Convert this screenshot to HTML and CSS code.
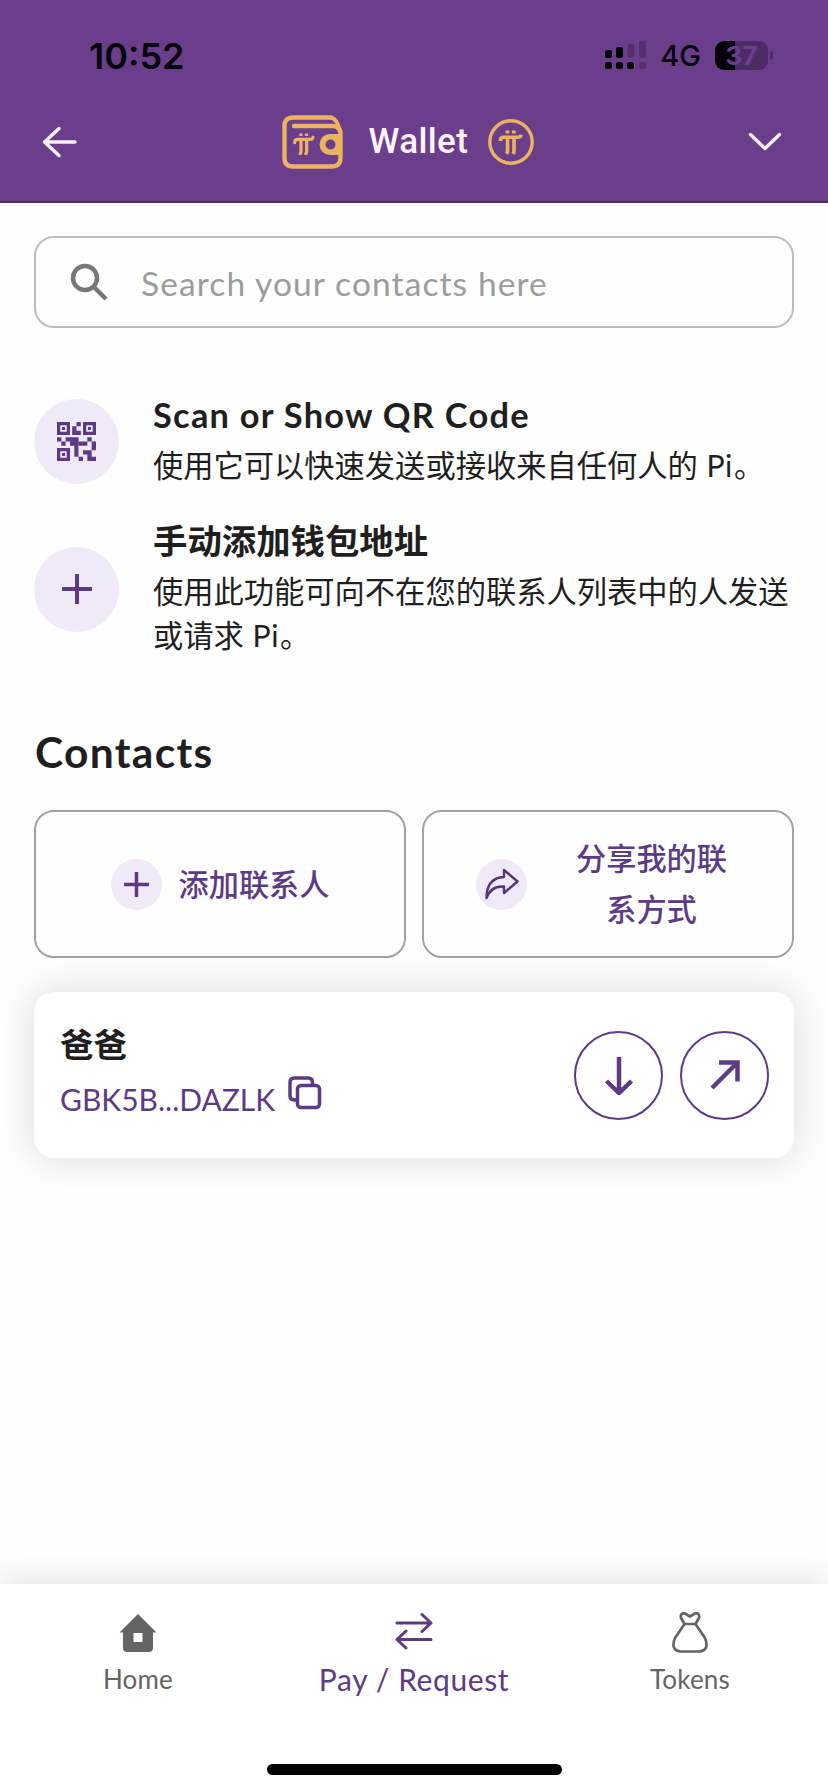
FILE: index.html
```html
<!DOCTYPE html>
<html lang="zh-CN">
<head>
<meta charset="utf-8">
<meta name="viewport" content="width=device-width">
<title>Wallet</title>
<link rel="stylesheet" href="styles.css">
</head>
<body>
<svg class="defs" width="0" height="0" aria-hidden="true">
  <symbol id="pi" viewBox="0 0 24 24">
    <path d="M6.800 .5h3.600v2.800H6.800zM12.900 .5h3.600v2.800h-3.600z" fill="currentColor"/>
    <path d="M1.800 10.500C1.800 7.800 3 7 5 7h13.500c2 0 3-.6 3.300-2.400M8.700 7v12.500q0 1.800-.9 3.500M14.900 7v12.500q0 1.800-.9 3.500" fill="none" stroke="currentColor" stroke-width="3.500"/>
  </symbol>
</svg>
<div class="screen">
  <header class="header">
    <div class="status">
      <span class="time">10:52</span>
      <div class="status-right">
        <svg class="signal" width="42" height="30" viewBox="0 0 42 30">
          <rect x="1" y="10" width="7" height="8" rx="2"/><rect x="12" y="7" width="7" height="11" rx="2"/>
          <rect x="1" y="22" width="7" height="7" rx="2.500"/><rect x="12" y="22" width="7" height="7" rx="2.500"/><rect x="23" y="22" width="7" height="7" rx="2.500"/>
          <g opacity=".2"><rect x="23.500" y="4" width="7" height="14" rx="2"/><rect x="35" y="1" width="7" height="17" rx="2"/><rect x="35" y="22" width="7" height="7" rx="2.500"/></g>
        </svg>
        <span class="network">4G</span>
        <div class="battery"><span class="battery-level">37</span></div>
        <span class="battery-tip"></span>
      </div>
    </div>
    <div class="titlebar">
      <svg class="back" width="36" height="32" viewBox="0 0 36 32"><path d="M33 16H2.500M17 2.500 2.500 16 17 29.500"/></svg>
      <div class="brand">
        <svg class="wallet" width="61" height="54" viewBox="0 0 61 54">
          <path d="M49 2.500H11Q2.500 2.500 2.500 11V43Q2.500 51.500 11 51.500H49Q58.500 51.500 58.500 43V19Q58.500 11 50 11H12" stroke-width="4.400"/>
          <path d="M49 2.500Q55.500 4.500 57 14" stroke-width="4"/>
          <path d="M59 19H48a10.500 10.500 0 0 0 0 21H59Z" fill="#ebb35f" stroke="none"/>
          <circle cx="48.500" cy="29.500" r="5" fill="#6a3e8b" stroke="none"/>
          <use href="#pi" x="11" y="18" width="22" height="22"/>
        </svg>
        <span class="brand-name">Wallet</span>
        <svg class="coin" width="46" height="46" viewBox="0 0 46 46"><circle cx="23" cy="23" r="21.200"/><use href="#pi" x="10" y="11" width="26" height="25"/></svg>
      </div>
      <svg class="chevron" width="34" height="20" viewBox="0 0 34 20"><path d="M2.500 2.500 17 16.500 31.500 2.500"/></svg>
    </div>
  </header>

  <main class="content">
    <label class="search">
      <svg width="38" height="38" viewBox="0 0 38 38"><circle cx="15" cy="15" r="12"/><path d="M23.500 23.500 36 36"/></svg>
      <span class="search-hint">Search your contacts here</span>
    </label>

    <section class="option option-scan">
      <div class="disc">
        <svg width="39" height="39" viewBox="0 0 18 18" fill="#5d3a86">
          <path fill-rule="evenodd" d="M0 0h6v6H0zM1.500 1.500v3h3v-3zM12 0h6v6h-6zM13.500 1.500v3h3v-3zM0 12h6v6H0zM1.500 13.500v3h3v-3z"/>
          <path d="M2.300 2.300h1.400v1.400H2.300zM14.300 2.300h1.400v1.400h-1.400zM2.300 14.300h1.400v1.400H2.300zM9 0h2v2H9zM7 2h2v2h2v2H7zM0 7h2v2H0zM2 9h2v2H2zM4 7h6v2H9.900v7H8v-5H8V9H4zM6 9h2v2H6zM14 7h2v2h-2zM10 9h4v2h-4zM16 9h2v4h-2zM12 13h4v3h2v2h-4v-3h-2zM10 16h2v2h-2z"/>
        </svg>
      </div>
      <div class="option-text">
        <h2 class="scan-title">Scan or Show QR Code</h2>
        <p>使用它可以快速发送或接收来自任何人的 <span class="latin">Pi</span>。</p>
      </div>
    </section>

    <section class="option option-manual">
      <div class="disc"><svg width="30" height="30" viewBox="0 0 30 30"><path d="M15 0V30M0 15H30" stroke="#5d3a86" stroke-width="4"/></svg></div>
      <div class="option-text">
        <h2>手动添加钱包地址</h2>
        <p>使用此功能可向不在您的联系人列表中的人发送<br>或请求 <span class="latin">Pi</span>。</p>
      </div>
    </section>

    <h1 class="contacts-title"><span>Contacts</span></h1>

    <div class="actions">
      <div class="action">
        <span class="disc-small"><svg width="25" height="25" viewBox="0 0 25 25"><path d="M12.500 0V25M0 12.500H25" stroke="#5d3a86" stroke-width="3.500"/></svg></span>
        <span class="add-label">添加联系人</span>
      </div>
      <div class="action action-share">
        <span class="disc-small"><svg width="36" height="32" viewBox="0 0 36 32"><path d="M20 2 33.500 13.500 20 25V18.500Q7 17.500 2.500 30 2.500 10 20 9Z" fill="none" stroke="#5a3478" stroke-width="2.400" stroke-linejoin="round"/></svg></span>
        <span class="share-label">分享我的联<br>系方式</span>
      </div>
    </div>

    <article class="contact">
      <div class="contact-info">
        <h3>爸爸</h3>
        <div class="address"><span>GBK5B...DAZLK</span>
          <svg width="34" height="34" viewBox="0 0 34 34"><rect x="9.500" y="9.500" width="22" height="22" rx="3.500"/><path d="M9.500 24H6.500Q2 24 2 19.500V6.500Q2 2 6.500 2H20Q24.500 2 24.500 6.500V9.500"/></svg>
        </div>
      </div>
      <div class="round"><svg width="30" height="40" viewBox="0 0 30 40"><path d="M15 2V38M2.500 26 15 38 27.500 26"/></svg></div>
      <div class="round"><svg width="30" height="30" viewBox="0 0 30 30"><path d="M2 28 27 3M9 2.500H27.500V21.500"/></svg></div>
    </article>
  </main>

  <nav class="nav">
    <div class="tabs">
      <div class="tab">
        <svg width="38" height="42" viewBox="0 0 38 42"><path fill-rule="evenodd" fill="#646464" d="M19 2 37.500 20.500H34V36Q34 40 30 40H8Q4 40 4 36V20.500H.5ZM14.500 21v9h9v-9z"/></svg>
        <span class="tab-home">Home</span>
      </div>
      <div class="tab tab-active">
        <svg width="38" height="42" viewBox="0 0 38 42"><path fill="none" stroke="#5d3a86" stroke-width="3" stroke-linecap="round" stroke-linejoin="round" d="M2 11H36M27 2.500 36 11 27 19.500M36 27.500H2M11 19 2 27.500 11 36"/></svg>
        <span class="tab-pay">Pay / Request</span>
      </div>
      <div class="tab">
        <svg width="38" height="42" viewBox="0 0 38 42"><path fill="none" stroke="#646464" stroke-width="2.700" stroke-linecap="round" stroke-linejoin="round" d="M13.500 12 9.800 5.500Q9.500.5 14 1.500L19 4.500 24 1.500Q28.500.5 28.200 5.500L24.500 12ZM13.500 12 4 26Q-1 38.500 10 39.500H28Q39 38.500 34 26L24.500 12"/></svg>
        <span class="tab-tokens">Tokens</span>
      </div>
    </div>
    <div class="home-indicator"></div>
  </nav>
</div>
</body>
</html>
```
FILE: styles.css
```css
* { box-sizing: border-box; margin: 0; padding: 0; }
body { background: #fefefe; color: #1f1f1f; font-family: Lato, "Noto Sans CJK SC", sans-serif; }
svg { display: block; flex: none; }
.defs { position: absolute; }
.screen { width: 828px; height: 1792px; display: flex; flex-direction: column; overflow: hidden; }

.header { height: 203px; background: #6a3e8b; border-bottom: 2px solid #4a2c60; }
.status { display: flex; justify-content: space-between; padding: 36px 55px 0 89px; height: 104px; font-family: Inter, sans-serif; color: #05000a; }
.time { font-size: 36px; font-weight: 600; line-height: 40px; }
.status-right { display: flex; height: 38px; align-items: center; }
.network { font-size: 29px; font-weight: 500; line-height: 38px; margin: 2px 14px 0 14px; }
.battery { width: 53px; height: 29px; border-radius: 9px; background: linear-gradient(90deg, #05000a 38%, #4c2c66 38%); text-align: center; }
.battery-level { font-size: 26px; font-weight: 700; line-height: 30px; color: #6a3e8b; }
.battery-tip { width: 3px; height: 9px; margin-left: 2px; border-radius: 0 3px 3px 0; background: #4c2c66; }
.titlebar { display: flex; align-items: center; justify-content: space-between; padding: 0 46px 0 42px; height: 76px; }
.back, .chevron { fill: none; stroke: #f7effb; stroke-width: 3.4; stroke-linecap: round; stroke-linejoin: round; }
.brand { display: flex; align-items: center; margin-left: -11px; }
.wallet, .coin { color: #ebb35f; fill: none; stroke: #ebb35f; stroke-width: 3.4; }
.wallet { stroke-linecap: round; }
.wallet use, .coin use { stroke: none; }
.brand-name { width: 98px; margin: 0 21px 0 26px; color: #fbf3ff; font-family: Roboto, sans-serif; font-size: 35px; font-weight: 500; line-height: 44px; letter-spacing: .4px; white-space: nowrap; }

.content { flex: 1; padding: 33px 34px 0; }
.search { display: flex; align-items: center; height: 92px; border: 2px solid #bdbdbd; border-radius: 20px; padding-left: 34px; gap: 33px; }
.search svg { fill: none; stroke: #777; stroke-width: 4.5; }
.search-hint { color: #9c9c9c; font-size: 33.500px; letter-spacing: 1.1px; line-height: 44px; padding-top: 2px; white-space: nowrap; }

.option { display: flex; align-items: center; gap: 34px; }
.option-scan { margin-top: 67px; height: 92px; }
.option-manual { margin-top: 28px; height: 148px; }
.disc { flex: none; display: flex; align-items: center; justify-content: center; width: 85px; height: 85px; border-radius: 50%; background: #f0e9f7; }
.option-text { white-space: nowrap; }
.option-scan .option-text, .option-manual .option-text { padding-bottom: 2px; }
.option h2 { font-size: 34.400px; line-height: 44px; font-weight: 700; margin-bottom: 6px; }
.option h2.scan-title { letter-spacing: 1.25px; }
.option p { font-size: 30.280px; line-height: 44px; font-weight: 400; }
.latin { letter-spacing: .5px; padding: 0 1px; }

.contacts-title { margin-top: 58px; height: 89px; font-size: 42.500px; line-height: 62px; font-weight: 700; padding-left: 1px; letter-spacing: 1.3px; }
.actions { display: grid; grid-template-columns: 1fr 1fr; gap: 16px; }
.action { display: flex; align-items: center; justify-content: center; gap: 17px; height: 148px; border: 2px solid #a39fab; border-radius: 20px; color: #5d3a86; font-size: 30.200px; font-weight: 500; }
.disc-small { display: flex; align-items: center; justify-content: center; width: 51px; height: 51px; border-radius: 50%; background: #f0e9f7; }
.add-label { padding-bottom: 3px; }
.action-share { gap: 49px; padding-right: 13px; }
.share-label { line-height: 51px; text-align: center; }

.contact { display: flex; align-items: center; gap: 17px; height: 166px; margin-top: 34px; padding: 0 25px 0 26px; border-radius: 20px; background: #fff; box-shadow: 0 0 40px rgba(0, 0, 0, .15); }
.contact-info { flex: 1; }
.contact h3 { font-size: 33.500px; line-height: 48px; font-weight: 600; padding-bottom: 4px; }
.address { display: flex; gap: 13px; color: #5d3a86; font-size: 30px; line-height: 54px; }
.address svg, .round svg { fill: none; stroke: #5d3a86; stroke-width: 3.5; }
.address svg { margin-top: 4px; }
.contact-info { padding-bottom: 4px; }
.round { display: flex; align-items: center; justify-content: center; width: 89px; height: 89px; border: 2px solid #5d3a86; border-radius: 50%; }
.round svg { stroke-width: 4.5; }

.nav { height: 208px; background: #fff; box-shadow: 0 0 36px rgba(0, 0, 0, .14); display: flex; flex-direction: column; align-items: center; justify-content: space-between; padding-bottom: 17px; }
.tabs { display: grid; grid-template-columns: repeat(3, 1fr); width: 828px; padding-top: 28px; }
.tab { display: flex; flex-direction: column; align-items: center; color: #646464; font-size: 26px; line-height: 36px; gap: 7px; letter-spacing: .2px; white-space: nowrap; }
.tab-active { color: #5d3a86; font-size: 30px; letter-spacing: .6px; }
.home-indicator { width: 295px; height: 11px; border-radius: 6px; background: #000; }
```
